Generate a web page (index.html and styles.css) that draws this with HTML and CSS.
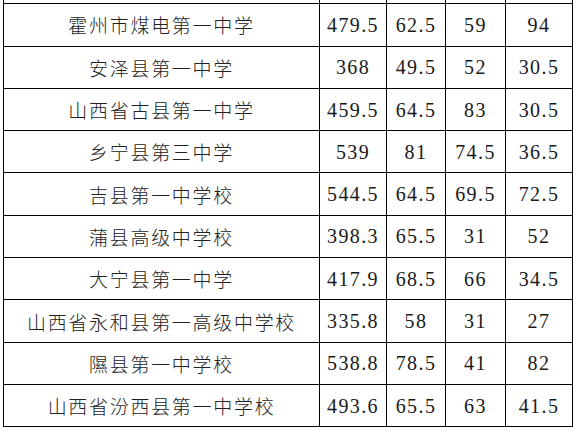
FILE: index.html
```html
<!DOCTYPE html>
<html lang="zh">
<head>
<meta charset="utf-8">
<link rel="stylesheet" href="styles.css">
</head>
<body>
<table class="scores">
<colgroup>
<col class="c-name"><col class="c-a"><col class="c-b"><col class="c-c"><col class="c-d">
</colgroup>
<tbody>
<tr class="cut"><td></td><td></td><td></td><td></td><td></td></tr>
<tr><td class="name">霍州市煤电第一中学</td><td>479.5</td><td>62.5</td><td>59</td><td>94</td></tr>
<tr><td class="name">安泽县第一中学</td><td>368</td><td>49.5</td><td>52</td><td>30.5</td></tr>
<tr><td class="name">山西省古县第一中学</td><td>459.5</td><td>64.5</td><td>83</td><td>30.5</td></tr>
<tr><td class="name">乡宁县第三中学</td><td>539</td><td>81</td><td>74.5</td><td>36.5</td></tr>
<tr><td class="name">吉县第一中学校</td><td>544.5</td><td>64.5</td><td>69.5</td><td>72.5</td></tr>
<tr><td class="name">蒲县高级中学校</td><td>398.3</td><td>65.5</td><td>31</td><td>52</td></tr>
<tr><td class="name">大宁县第一中学</td><td>417.9</td><td>68.5</td><td>66</td><td>34.5</td></tr>
<tr><td class="name">山西省永和县第一高级中学校</td><td>335.8</td><td>58</td><td>31</td><td>27</td></tr>
<tr><td class="name">隰县第一中学校</td><td>538.8</td><td>78.5</td><td>41</td><td>82</td></tr>
<tr><td class="name">山西省汾西县第一中学校</td><td>493.6</td><td>65.5</td><td>63</td><td>41.5</td></tr>
</tbody>
</table>
</body>
</html>
```
FILE: styles.css
```css
html, body {
  margin: 0;
  padding: 0;
  background: #ffffff;
}
body {
  overflow: hidden;
  width: 579px;
  height: 432px;
}
.scores {
  border-collapse: collapse;
  table-layout: fixed;
  width: 570px;
  margin: -39px 0 0 3px;
  font-family: "Liberation Serif", "Noto Sans CJK SC", serif;
  font-size: 20px;
  color: #1a1a1a;
}
.c-name { width: 316px; }
.c-a { width: 67px; }
.c-b { width: 59px; }
.c-c { width: 60px; }
.c-d { width: 67px; }
.scores tr {
  height: 42.3px;
}
.scores td {
  border: 1px solid #000;
  padding: 0;
  text-align: center;
  vertical-align: middle;
  letter-spacing: 1.4px;
  line-height: 1;
}
.scores td.name {
  font-family: "Noto Sans CJK SC", sans-serif;
  font-weight: 300;
  font-size: 19px;
  letter-spacing: 1.7px;
  color: #222;
}
```
